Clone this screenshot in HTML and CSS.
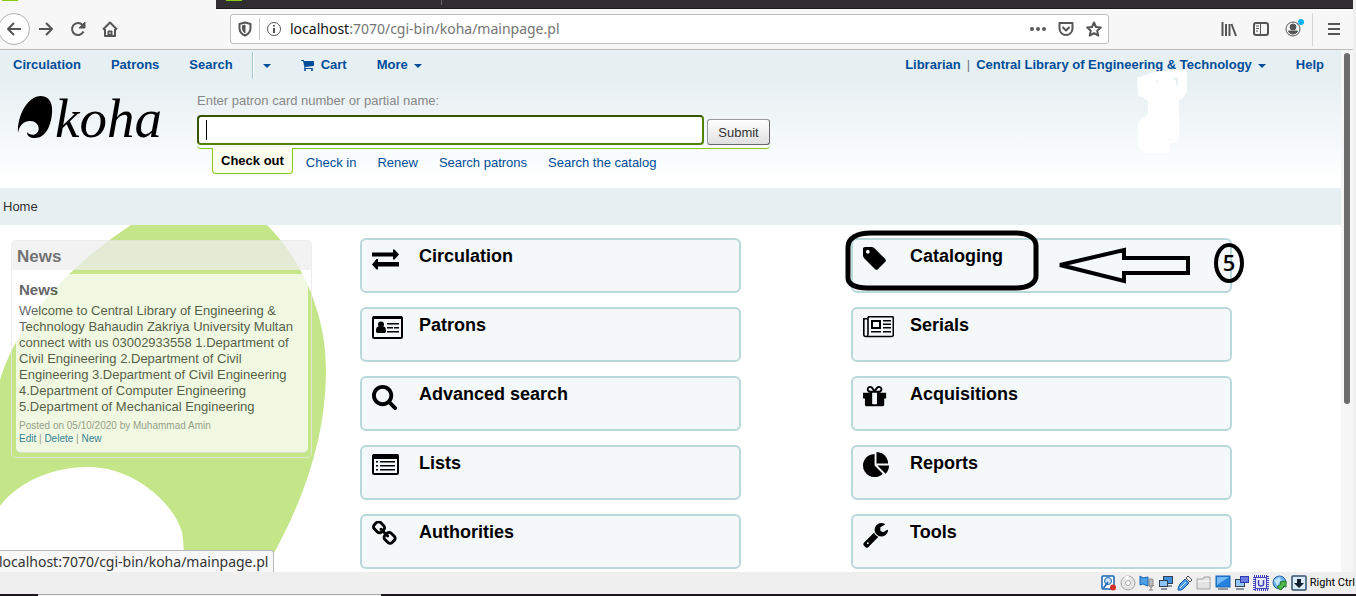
FILE: index.html
```html
<!DOCTYPE html>
<html lang="en">
<head>
<meta charset="utf-8">
<title>Koha staff client</title>
<link rel="stylesheet" href="styles.css">
</head>
<body>
<div class="guest">
  <div class="tabstrip">
    <div class="tab-active"><span class="favicon"></span></div>
    <div class="tab-rest"><span class="favicon"></span><span class="tab-end"></span></div>
  </div>

  <div class="toolbar">
    <div class="tools tools-left">
      <button class="tool back" aria-label="Back"><svg width="16" height="16" viewBox="0 0 16 16" class="stroke"><path d="M15 8H2M8 2L2 8l6 6"/></svg></button>
      <button class="tool" aria-label="Forward"><svg width="16" height="16" viewBox="0 0 16 16" class="stroke"><path d="M1 8h13M8 2l6 6-6 6"/></svg></button>
      <button class="tool" aria-label="Reload"><svg width="16" height="16" viewBox="0 0 16 16" class="stroke"><path d="M13.500 10.500A6 6 0 1 1 12.500 4"/><path d="M15 1v6H9z" class="solid"/></svg></button>
      <button class="tool" aria-label="Home"><svg width="16" height="16" viewBox="0 0 16 16" class="stroke"><path d="M1 8.500L8 1.500l7 7M3 8v7h10V8"/><path d="M6 15v-5h4v5z" class="solid"/><path d="M8 11v2" stroke="#f7f7f7" stroke-width="1"/></svg></button>
    </div>
    <div class="urlbar">
      <svg width="14" height="16" viewBox="0 0 14 16" class="stroke"><path d="M7 1.500L12.500 3v4c0 3.500-2 6-5.500 7.500C3.500 13 1.500 10.500 1.500 7V3z"/><path d="M7 4v8C5 10.500 4.500 9 4.500 7V4.700z" class="solid thin"/></svg>
      <span class="url-sep"></span>
      <svg width="16" height="16" viewBox="0 0 16 16" class="stroke thin"><circle cx="8" cy="8" r="6.500"/><path d="M8 7v5M8 4v1.600" stroke-width="2"/></svg>
      <div class="url" role="textbox" aria-label="Address"><b>localhost</b>:7070/cgi-bin/koha/mainpage.pl</div>
      <button class="url-btn" aria-label="Page actions"><svg width="16" height="16" viewBox="0 0 16 16" fill="#5a5a5a"><circle cx="2" cy="8" r="2"/><circle cx="8" cy="8" r="2"/><circle cx="14" cy="8" r="2"/></svg></button>
      <button class="url-btn" aria-label="Save to Pocket"><svg width="16" height="16" viewBox="0 0 16 16" class="stroke"><path d="M1.500 2h13v5.500a6.500 6.500 0 0 1-13 0z"/><path d="M4.500 6L8 9.500 11.500 6"/></svg></button>
      <button class="url-btn" aria-label="Bookmark"><svg width="16" height="16" viewBox="0 0 16 16" class="stroke"><path d="M8 1.500l2 4.500 4.800.5-3.600 3.200 1.100 4.900L8 12.100l-4.300 2.500 1.100-4.900L1.200 6.500 6 6z"/></svg></button>
    </div>
    <div class="tools tools-right">
      <button class="tool" aria-label="Library"><svg width="16" height="16" viewBox="0 0 16 16" class="stroke"><path d="M1.500 1v14M5 3v12M8.500 3v12M10.500 3l4.500 12"/></svg></button>
      <button class="tool" aria-label="Sidebars"><svg width="16" height="16" viewBox="0 0 16 16" class="stroke"><rect x="1" y="2" width="14" height="12" rx="2"/><path d="M7.500 2v12M3 5h3M3 7.500h3M3 10h2" stroke-width="1"/></svg></button>
      <button class="tool" aria-label="Account"><svg width="22" height="22" viewBox="0 0 22 22" class="stroke thin"><circle cx="11" cy="11" r="7"/><circle cx="11" cy="9" r="3" class="solid"/><path d="M6.500 13h9c-1 4-8 4-9 0z" class="solid"/><circle cx="19" cy="4" r="3" fill="#00b3f4" stroke="none"/></svg></button>
      <span class="tool-sep"></span>
      <button class="tool" aria-label="Menu"><svg width="16" height="16" viewBox="0 0 16 16" class="stroke"><path d="M2 3h12M2 8h12M2 13h12"/></svg></button>
    </div>
  </div>

  <div class="viewport">
    <div class="page">
      <header class="header">
        <nav class="nav">
          <a href="#">Circulation</a>
          <a href="#">Patrons</a>
          <a href="#" class="nav-search">Search</a>
          <a href="#" class="nav-drop" aria-label="Search options"><span class="caret"></span></a>
          <a href="#"><svg width="13" height="13" viewBox="64 128 1664 1664" fill="#004d99"><path d="M704 1536q0 52-38 90t-90 38-90-38-38-90 38-90 90-38 90 38 38 90zm896 0q0 52-38 90t-90 38-90-38-38-90 38-90 90-38 90 38 38 90zm128-1088v512q0 24-16.500 42.500t-40.500 21.500l-1044 122q13 60 13 70 0 16-24 64h920q26 0 45 19t19 45-19 45-45 19h-1024q-26 0-45-19t-19-45q0-11 8-31.500t16-36 21.500-40 15.500-29.500l-177-823h-204q-26 0-45-19t-19-45 19-45 45-19h256q16 0 28.500 6.500t19.500 15.500 13 24.500 8 26 5.500 29.500 4.500 26h1201q26 0 45 19t19 45z"/></svg><span class="cart-label">Cart</span></a>
          <a href="#">More<span class="caret"></span></a>
          <a href="#" class="nav-user"><span>Librarian</span><span class="pipe">|</span><span>Central Library of Engineering &amp; Technology</span><span class="caret"></span></a>
          <a href="#">Help</a>
        </nav>
        <div class="masthead">
          <a href="#" class="logo" aria-label="Koha home">
            <svg width="36" height="44" viewBox="0 0 36 44"><path d="M1 38C0 20 11 1 24 1c9 0 12 9 11 17C34 32 28 43 18 43c-5 0-8-2-8-6 2 3 7 4 10 1 4-4 1-12-7-12-7 0-11 5-12 12z"/></svg>
            <span>koha</span>
          </a>
          <form class="checkout">
            <label for="patron">Enter patron card number or partial name:</label>
            <div class="checkout-row">
              <span class="field"><input id="patron" type="text"></span>
              <button type="button" class="submit">Submit</button>
            </div>
            <div class="tabs-line"></div>
            <div class="tabs">
              <a href="#" class="selected">Check out</a>
              <a href="#">Check in</a>
              <a href="#">Renew</a>
              <a href="#">Search patrons</a>
              <a href="#">Search the catalog</a>
            </div>
          </form>
        </div>
        <svg class="smudge" width="52" height="84" viewBox="0 0 52 84" fill="#fff" fill-rule="evenodd"><path d="M1 9L12 5l10-3 10 0 2-1h17v21l-3 6-5 3v31l0 7-3 5h-6v15H14l-6-6-6-6V54l4-5 6-4V32L6 28l-4-1zM37 9h5v5l-2 4v-7h-3zM19 12l3-1v3z"/></svg>
      </header>

      <div class="crumbs">Home</div>

      <main class="main">
        <svg class="blob" width="330" height="347" viewBox="0 0 330 347" fill="#c4e588"><path d="M131 0C75 37 20 90 0 155V281C20 255 55 242 88 242C135 242 174 279 182 307C184 320 184 330 184 347H263C302 282 326 215 326 145C326 88 301 33 267 0z"/></svg>
        <section class="news">
          <h2>News</h2>
          <article>
            <h3>News</h3>
            <p>Welcome to Central Library of Engineering &amp; Technology Bahaudin Zakriya University Multan connect with us 03002933558 1.Department of Civil Engineering 2.Department of Civil Engineering 3.Department of Civil Engineering 4.Department of Computer Engineering 5.Department of Mechanical Engineering</p>
            <p class="meta">Posted on 05/10/2020 by Muhammad Amin<br><a href="#">Edit</a> | <a href="#">Delete</a> | <a href="#">New</a></p>
          </article>
        </section>

        <section class="modules">
          <a href="#" class="card"><svg class="ico" viewBox="0 0 27 27"><path d="M0 7.500h21V4.500h1.500L27 9.500l-4.500 5H21v-3H0zM27 17H6v-3H4.500L0 19.500l4.500 5H6v-3h21z"/></svg><span>Circulation</span></a>
          <a href="#" class="card"><svg class="ico" viewBox="128 0 1792 1792"><path d="M576 448q0-53-37.500-90.500t-90.500-37.500-90.500 37.500-37.500 90.500 37.500 90.500 90.500 37.500 90.500-37.500 37.500-90.500zm1067 576q0 53-37 90l-491 492q-39 37-91 37-53 0-90-37l-715-716q-38-37-64.500-101t-26.500-117v-416q0-52 38-90t90-38h416q53 0 117 26.500t102 64.500l715 714q37 39 37 91z"/></svg><span>Cataloging</span>
            <svg class="markup" width="404" height="66" viewBox="0 0 404 66"><path d="M5 19C5 10 14 5 28 5H172c13 0 21 5 21 13V48c0 7-8 12-20 12H24C12 60 5 56 5 50z" stroke-width="5"/><path d="M217 37L281 22v8h64v15h-64v8z" stroke-width="4"/><ellipse cx="386" cy="35" rx="13" ry="18" stroke-width="4"/><text x="386" y="43" text-anchor="middle">5</text></svg>
          </a>
          <a href="#" class="card"><svg class="ico wide" viewBox="0 0 31 27"><rect x="1" y="3" width="29" height="21" rx="1" fill="none" stroke="#000" stroke-width="2"/><path d="M1 2h29v3H1z"/><circle cx="9" cy="10.500" r="3"/><path d="M4 17c0-4 1.500-5 3-4.500h4c1.500-.5 3 .5 3 4.500 0 1-.5 2-1.500 2h-7C4.500 19 4 18 4 17zM15 9h12v1.500H15zM15 13h6v1.500h-6zM22 13h5v1.500h-5zM15 17h12v1.500H15z"/></svg><span>Patrons</span></a>
          <a href="#" class="card"><svg class="ico wide" viewBox="0 0 31 27"><path d="M5 2.800h24.500q.8 0 .8.800v17.400q0 1.500-1.500 1.500h-26q-2 0-2-2V4.800h4M5 2.800V20q0 2-1.500 2.500" fill="none" stroke="#000" stroke-width="1.600"/><path d="M8 6h10v9H8zm2 2v5h6V8z" fill-rule="evenodd"/><path d="M20 6h8v1.500h-8zM20 9.500h8V11h-8zM20 13h8v1.500h-8zM8 17h10v1.500H8zM20 17h8v1.500h-8z"/></svg><span>Serials</span></a>
          <a href="#" class="card"><svg class="ico" viewBox="64 0 1792 1792"><path d="M1216 832q0-185-131.500-316.500t-316.500-131.500-316.500 131.500-131.500 316.500 131.500 316.500 316.500 131.500 316.500-131.500 131.500-316.500zm512 832q0 52-38 90t-90 38q-54 0-90-38l-343-342q-179 124-399 124-143 0-273.500-55.500t-225-150-150-225-55.500-273.500 55.500-273.500 150-225 225-150 273.500-55.500 273.500 55.500 225 150 150 225 55.500 273.500q0 220-124 399l343 343q37 37 37 90z"/></svg><span>Advanced search</span></a>
          <a href="#" class="card"><svg class="ico" viewBox="128 0 1792 1792"><path d="M1056 1356v-716h-320v716q0 25 18 38.500t46 13.500h192q28 0 46-13.500t18-38.500zm-456-844h195l-126-161q-26-31-69-31-40 0-68 28t-28 68 28 68 68 28zm688-96q0-40-28-68t-68-28q-43 0-69 31l-125 161h194q40 0 68-28t28-68zm376 256v320q0 14-9 23t-23 9h-96v416q0 40-28 68t-68 28h-1088q-40 0-68-28t-28-68v-416h-96q-14 0-23-9t-9-23v-320q0-14 9-23t23-9h440q-93 0-158.500-65.500t-65.500-158.500 65.500-158.500 158.500-65.500q107 0 168 77l128 165 128-165q61-77 168-77 93 0 158.500 65.500t65.500 158.500-65.500 158.500-158.500 65.500h440q14 0 23 9t9 23z"/></svg><span>Acquisitions</span></a>
          <a href="#" class="card"><svg class="ico" viewBox="0 0 27 27"><rect x="1" y="3" width="25" height="19" rx="1" fill="none" stroke="#000" stroke-width="2"/><path d="M1 2h25v5H1zM4 9h2v1.500H4zM4 13h2v1.500H4zM4 17h2v1.500H4zM8 9h15v1.500H8zM8 13h15v1.500H8zM8 17h15v1.500H8z"/></svg><span>Lists</span></a>
          <a href="#" class="card"><svg class="ico" viewBox="0 0 1792 1792"><path d="M768 890l546 546q-106 108-247.500 168t-298.500 60q-209 0-385.500-103t-279.500-279.500-103-385.500 103-385.500 279.500-279.500 385.500-103v762zm187 6h773q0 157-60 298.500t-168 247.500zm709-128h-768v-768q209 0 385.500 103t279.500 279.500 103 385.500z"/></svg><span>Reports</span></a>
          <a href="#" class="card"><svg class="ico" viewBox="79 64 1792 1792"><path d="M1520 1216q0-40-28-68l-208-208q-28-28-68-28-42 0-72 32 3 3 19 18.500t21.500 21.500 15 19 13 25.500 3.500 27.500q0 40-28 68t-68 28q-15 0-27.500-3.500t-25.500-13-19-15-21.500-21.500-18.500-19q-33 31-33 73 0 40 28 68l206 207q27 27 68 27 40 0 68-26l147-146q28-28 28-67zm-703-705q0-40-28-68l-206-207q-28-28-68-28-39 0-68 27l-147 146q-28 28-28 67 0 40 28 68l208 208q27 27 68 27 42 0 72-31-3-3-19-18.500t-21.500-21.500-15-19-13-25.500-3.500-27.500q0-40 28-68t68-28q15 0 27.500 3.500t25.500 13 19 15 21.500 21.500 18.500 19q33-31 33-73zm895 705q0 120-85 203l-147 146q-83 83-203 83-121 0-204-85l-206-207q-83-83-83-203 0-123 88-209l-88-88q-86 88-208 88-120 0-204-84l-208-208q-84-84-84-204t85-203l147-146q83-83 203-83 121 0 204 85l206 207q83 83 83 203 0 123-88 209l88 88q86-88 208-88 120 0 204 84l208 208q84 84 84 204z"/></svg><span>Authorities</span></a>
          <a href="#" class="card"><svg class="ico" viewBox="64 0 1792 1792"><path d="M448 1472q0-26-19-45t-45-19-45 19-19 45 19 45 45 19 45-19 19-45zm644-420l-682 682q-37 37-90 37-52 0-91-37l-106-108q-38-36-38-90 0-53 38-91l681-681q39 98 114.500 173.500t173.500 114.500zm634-435q0 39-23 106-47 134-164.500 217.500t-258.500 83.500q-185 0-316.500-131.500t-131.500-316.500 131.500-316.500 316.500-131.500q58 0 121.500 16.500t107.500 46.500q16 11 16 28t-16 28l-293 169v224l193 107q5-3 79-48.500t135.500-81 70.500-35.500q15 0 23.500 10t8.500 25z"/></svg><span>Tools</span></a>
        </section>
      </main>
    </div>
    <div class="scrollbar"><div class="thumb"></div></div>
    <div class="link-status"><span>localhost:7070/cgi-bin/koha/mainpage.pl</span></div>
  </div>
</div>

<footer class="vmbar">
  <svg width="16" height="16" viewBox="0 0 16 16"><rect x="1" y="1" width="12" height="13" rx="1" fill="#fff" stroke="#1564b5" stroke-width="1.500"/><circle cx="7" cy="6" r="3.500" fill="#cfe4f8" stroke="#1564b5"/><path d="M2.500 13L7 7" stroke="#1564b5" stroke-width="1.500"/><circle cx="12" cy="12.500" r="3" fill="#d93025"/></svg>
  <svg width="16" height="16" viewBox="0 0 16 16"><circle cx="8" cy="8" r="7" fill="#e6e6e6" stroke="#a5a5a5"/><path d="M8 8L4 2a7 7 0 0 1 5-1z" fill="#fff"/><circle cx="8" cy="8" r="2.500" fill="#fff" stroke="#a5a5a5"/></svg>
  <svg width="16" height="16" viewBox="0 0 16 16"><path d="M1 1l3 2 5-1v9L4 9l-3 1z" fill="#4fa0e8" stroke="#1564b5"/><rect x="10" y="4" width="4" height="7" rx="1" fill="#bbb" stroke="#888"/><path d="M9 10q3 4 6 0M12 12v3M10 15h4" fill="none" stroke="#888"/></svg>
  <svg width="16" height="16" viewBox="0 0 16 16"><rect x="5.500" y="1.500" width="9" height="7" fill="#3f8fe0" stroke="#35424f"/><path d="M10 10h4v2h-4z" fill="#8a949e"/><rect x="1.500" y="5.500" width="8" height="6" fill="#8cc4f6" stroke="#35424f"/><path d="M3 14h6" stroke="#8a949e" stroke-width="2"/></svg>
  <svg width="16" height="16" viewBox="0 0 16 16"><path d="M11 1l4 4-2 2-4-4z" fill="#fff" stroke="#444"/><path d="M8 4l4 4-6 6q-3 2-5 1 0-3 2-6z" fill="#4f9ce8" stroke="#1858a5"/><path d="M3 13l6-6" stroke="#d7ebff"/></svg>
  <svg width="16" height="16" viewBox="0 0 16 16"><path d="M1 4h6l1-2h6v12H1z" fill="#e3e3e3" stroke="#a2a2a2"/><path d="M2 6h12" stroke="#fff"/></svg>
  <svg width="16" height="16" viewBox="0 0 16 16"><rect x="1" y="1" width="14" height="11" fill="#2481dd" stroke="#1564b5"/><path d="M2 2h12L2 10z" fill="#76b9f5"/><path d="M3 14h10" stroke="#999" stroke-width="2"/></svg>
  <svg width="16" height="16" viewBox="0 0 16 16"><rect x="1.500" y="4.500" width="9" height="7" fill="#93c7f6" stroke="#35424f"/><path d="M2 14h8" stroke="#8a949e" stroke-width="2"/><rect x="6.500" y="1.500" width="8" height="6" fill="#6a7ce0" stroke="#303ab0"/></svg>
  <svg width="16" height="16" viewBox="0 0 16 16"><rect x="1" y="1" width="14" height="14" fill="none" stroke="#4545c0" stroke-width="2" stroke-dasharray="1 1"/><rect x="2.500" y="2.500" width="11" height="11" fill="#e8e9ff" stroke="#4545c0"/><path d="M5.500 5v4q0 2 2.500 2t2.500-2V5" fill="none" stroke="#4545c0" stroke-width="1.500"/></svg>
  <svg width="16" height="16" viewBox="0 0 16 16"><circle cx="7.500" cy="7.500" r="6.500" fill="#69aeea" stroke="#2b6ca8"/><path d="M2 5l6-3 1 4-4 5z" fill="#bce2ff"/><path d="M8 7l6-1v6l-2-1-3 4-4-3 4-3z" fill="#55b948" stroke="#247a28"/></svg>
  <svg width="16" height="16" viewBox="0 0 16 16"><rect x="1" y="1" width="14" height="14" rx="1" fill="#dcebf9" stroke="#35506e" stroke-width="1.500"/><path d="M6 4h4v4h3l-5 5-5-5h3z" fill="#14202e"/></svg>
  <span>Right Ctrl</span>
</footer>
<div class="edge"><span></span></div>
</body>
</html>
```
FILE: styles.css
```css
* { box-sizing: border-box; }
html, body { height: 100%; }
body {
  margin: 0;
  display: flex;
  flex-direction: column;
  overflow: hidden;
  background: #efefef;
  font: 13px/16px "Liberation Sans", Arial, sans-serif;
  color: #333;
}
a { color: #004d99; text-decoration: none; }
button { font: inherit; border: 0; background: none; padding: 0; }
svg { display: block; flex: none; }
h2, h3, p { margin: 0; }

.stroke { fill: none; stroke: #555; stroke-width: 2; stroke-linejoin: round; }
.thin { stroke-width: 1; }
.solid { fill: #555; stroke-width: 1; }

/* Browser chrome */
.guest { flex: 1; min-height: 0; display: flex; flex-direction: column; margin-right: 3px; }
.tabstrip { display: flex; height: 9px; }
.tab-active { width: 16%; background: #f7f7f7; padding-left: 2px; }
.tab-rest {
  flex: 1;
  display: flex;
  padding-left: 10px;
  background: #302e30;
  border-bottom: 1px solid #1c1b1c;
}
.favicon { display: block; width: 16px; height: 1px; background: #85ca11; }
.tab-end { width: 1px; height: 5px; margin-left: 199px; background: #666; }

.toolbar {
  display: flex;
  align-items: center;
  height: 41px;
  background: #f7f7f7;
  border-bottom: 1px solid #b9b9b9;
}
.tools { display: flex; align-items: center; }
.tools-left { margin-left: -2px; }
.tools-right { padding-right: 3px; }
.tool { width: 32px; height: 32px; display: flex; align-items: center; justify-content: center; }
.back { border: 1px solid #b1b1b1; border-radius: 50%; background: #fff; }
.tool-sep { width: 1px; height: 33px; margin: 0 5px 0 3px; background: #d6d6d6; }
.urlbar {
  flex: 1;
  display: flex;
  align-items: center;
  height: 30px;
  margin: 0 104px 0 104px;
  padding: 0 6px 0 7px;
  background: #fff;
  border: 1px solid #bdbdbd;
  border-radius: 3px;
}
.url-sep { width: 1px; height: 22px; margin: 0 6px 0 7px; background: #c4c4c4; }
.url { flex: 1; margin-left: 8px; font: 14px/20px "Noto Sans", sans-serif; color: #757575; white-space: nowrap; }
.url b { font-weight: 400; color: #111; }
.url-btn { margin-left: 12px; }

/* Page */
.viewport { position: relative; flex: 1; min-height: 0; display: flex; background: #fff; overflow: hidden; }
.page { flex: 1; min-width: 0; display: flex; flex-direction: column; }
.header { position: relative; background: linear-gradient(#e6eff2 20%, #fff 95%); padding-bottom: 14px; }
.nav { display: flex; align-items: center; height: 30px; padding: 0 2px 0 0; margin-left: -2px; font-weight: 700; }
.nav a { display: flex; align-items: center; padding: 0 15px; white-space: nowrap; }
.nav .nav-search { padding-right: 19px; }
.nav .nav-drop { height: 27px; padding-left: 10px; border-left: 1px solid #a3c6cf; box-shadow: inset 1px 0 #fff; }
.nav .nav-user { margin-left: auto; }
.caret { border: 4px solid transparent; border-top-color: #004d99; border-bottom: 0; margin: 2px 0 0 6px; }
.nav-drop .caret { margin-left: 0; }
.pipe { margin: 0 6px; color: #777; font-weight: 400; }
.cart-label { margin-left: 7px; }

.masthead { display: flex; align-items: flex-start; padding-top: 12px; }
.logo { display: flex; width: 197px; padding: 3px 0 0 17px; color: #000; }
.logo span { font: italic 55px/48px "Liberation Serif", serif; margin-left: 2px; }
.checkout { flex: 1; max-width: 573px; }
.checkout label { display: block; padding-top: 1px; color: #888; }
.checkout-row { display: flex; align-items: flex-end; gap: 3px; margin-top: 6px; }
.field { position: relative; flex: 1; }
.field::after { content: ""; position: absolute; left: 9px; top: 5px; width: 1px; height: 20px; background: #000; }
.field input {
  display: block;
  width: 100%;
  height: 30px;
  padding: 0 8px;
  border: 2px solid #538200;
  border-top-color: #365500;
  border-left-color: #365500;
  border-radius: 4px;
  background: #fff;
  font: inherit;
  outline: 0;
}
.submit {
  width: 63px;
  height: 26px;
  padding-top: 1px;
  border: 1px solid #999;
  border-right-color: #666;
  border-bottom-color: #666;
  border-radius: 3px;
  background: linear-gradient(#fff, #e0e0e0);
  color: #333;
}
.tabs-line { height: 4px; border-bottom: 1px solid #85ca11; border-radius: 0 0 4px 4px; }
.tabs { display: flex; gap: 21px; padding-left: 15px; height: 25px; line-height: 28px; white-space: nowrap; }
.tabs .selected {
  margin: -1px -8px 0 0;
  padding: 0 8px;
  line-height: 26px;
  background: #fffff0;
  border: 1px solid #85ca11;
  border-top: 0;
  border-radius: 0 0 4px 4px;
  color: #000;
  font-weight: 700;
}
.smudge { position: absolute; right: 153px; top: 19px; }
.crumbs { padding: 11px 3px 10px; background: #e6eff2; }

.main {
  position: relative;
  flex: 1;
  display: grid;
  grid-template-columns: 301fr 872fr;
  gap: 48px;
  align-items: start;
  padding: 13px 109px 0 11px;
}
.blob { position: absolute; left: 0; top: 0; }
.news { position: relative; margin-top: 2px; border: 1px solid #e8e8e8; border-radius: 5px; opacity: .75; }
.news h2 { padding: 7px 5px 4px; background: #eee; font-size: 17px; line-height: 18px; color: #444; }
.news article { margin: 4px 3px 4px 4px; padding: 8px 3px 7px; background: #fff; border-radius: 5px; border-bottom: 1px solid #ddd; }
.news h3 { font-size: 15px; line-height: 16px; margin-bottom: 5px; }
.news .meta { margin-top: 4px; font-size: 10px; line-height: 13px; color: #888; }
.news .meta a { color: #005e99; }

.modules { display: grid; grid-template-columns: 1fr 1fr; gap: 14px 110px; }
.card {
  position: relative;
  display: flex;
  align-items: flex-start;
  height: 55px;
  padding: 5px 10px;
  background: #f4f8f9;
  border: 2px solid #b9d8d9;
  border-radius: 6px;
  color: #000;
  font-size: 18px;
  font-weight: 700;
  line-height: 22px;
}
.ico { width: 27px; height: 27px; margin-right: 20px; }
.wide { width: 31px; margin-right: 16px; }
.markup { position: absolute; left: -10px; top: -12px; fill: none; stroke: #000; z-index: 1; }
.markup text { fill: #000; stroke: none; font: 600 22px "Open Sans", sans-serif; }

.scrollbar { width: 12px; padding: 3px; background: #f6f6f6; }
.thumb { height: 68%; border-radius: 3px; background: #6c6c6c; }
.link-status {
  position: absolute;
  left: 0;
  bottom: 0;
  padding: 0 4px 0 0;
  background: #f7f7f7;
  border: 1px solid #b9b9b9;
  border-width: 1px 1px 0 0;
  border-radius: 0 3px 0 0;
  font: 14px/21px "Noto Sans", sans-serif;
  white-space: nowrap;
  overflow: hidden;
}
.link-status span { margin-left: -1px; }

/* Virtual machine status bar */
.vmbar { display: flex; align-items: center; justify-content: flex-end; gap: 3px; height: 22px; padding-right: 1px; }
.vmbar span { font: 11px/16px Roboto, sans-serif; color: #000; white-space: nowrap; }
.edge { height: 2px; padding-left: 38px; background: #1b191b; }
.edge span { display: block; width: 26%; height: 2px; background: #efefef; border-top: 1px solid #aaa; }
```
